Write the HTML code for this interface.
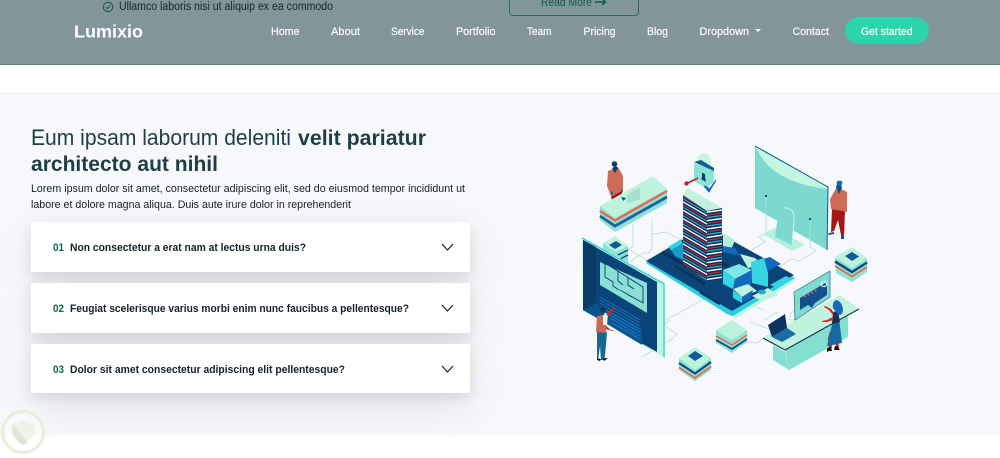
<!DOCTYPE html>
<html lang="en">
<head>
<meta charset="utf-8">
<title>Lumixio</title>
<style>
html,body{margin:0;padding:0;width:1000px;height:458px;overflow:hidden;background:#fff;font-family:"Liberation Sans",sans-serif}
.hdr{position:absolute;left:0;top:0;width:1000px;height:64px;background:#82959a;border-bottom:1px solid #55807e}
.sec{position:absolute;left:0;top:92px;width:1000px;height:343px;background:#f6f8fb}
.card{position:absolute;left:31px;width:439px;background:#fff;box-shadow:0 4px 12px rgba(0,0,0,.09),0 14px 40px rgba(0,0,0,.09)}
.pill{position:absolute;left:845px;top:17px;width:84px;height:27px;border-radius:14px;background:#2dd3a9}
.rm{position:absolute;left:509px;top:-8px;width:128px;height:22px;border:1px solid #2f6b64;border-radius:4px}
svg{position:absolute;left:0;top:0}
.art{filter:blur(.3px)}
</style>
</head>
<body>
<div class="hdr"></div>
<div class="rm"></div>
<div class="pill"></div>
<div class="sec"></div>
<div class="card" style="top:222px;height:50px"></div>
<div class="card" style="top:283px;height:50px"></div>
<div class="card" style="top:344px;height:49px"></div>

<svg width="1000" height="458" viewBox="0 0 1000 458" xmlns="http://www.w3.org/2000/svg" font-family="'Liberation Sans',sans-serif">
<defs>
<pattern id="tl" width="10" height="8.4" patternUnits="userSpaceOnUse" patternTransform="skewY(30)">
<rect width="10" height="8.4" fill="#0b2a55"/><rect y="0" width="10" height="1.5" fill="#fff"/><rect y="3" width="10" height="1.1" fill="#d92b3a"/><rect y="5.6" width="10" height="1.1" fill="#27d3e0"/>
</pattern>
<pattern id="tr" width="10" height="8.4" patternUnits="userSpaceOnUse" patternTransform="skewY(-8)">
<rect width="10" height="8.4" fill="#0b2a55"/><rect y="0" width="10" height="1.5" fill="#fff"/><rect y="3" width="10" height="1.1" fill="#d92b3a"/><rect y="5.6" width="10" height="1.1" fill="#27d3e0"/>
</pattern>
</defs>

<!-- top strip -->
<circle cx="108" cy="7" r="4.7" fill="none" stroke="#0e5a40" stroke-width="1"/>
<path d="M105.800 7l1.600 1.600 2.800-3" fill="none" stroke="#0e5a40" stroke-width="1"/>
<text x="119" y="10" font-size="11.500" fill="#17262a" textLength="214" lengthAdjust="spacingAndGlyphs">Ullamco laboris nisi ut aliquip ex ea commodo</text>
<text x="541" y="6" font-size="11.500" fill="#0f5a4a" textLength="51" lengthAdjust="spacingAndGlyphs">Read More</text>
<path d="M595 2h10M602 -1l3.500 3-3.500 3" fill="none" stroke="#0f5a4a" stroke-width="1.400"/>

<!-- nav -->
<text x="74" y="37.500" font-size="17.500" font-weight="700" fill="#fff" textLength="69" lengthAdjust="spacingAndGlyphs">Lumixio</text>
<g font-size="11.200" fill="#fff" stroke="#fff" stroke-width=".15">
<text x="271" y="35" textLength="28.500" lengthAdjust="spacingAndGlyphs">Home</text>
<text x="331" y="35" textLength="29" lengthAdjust="spacingAndGlyphs">About</text>
<text x="391" y="35" textLength="33.500" lengthAdjust="spacingAndGlyphs">Service</text>
<text x="456" y="35" textLength="39.500" lengthAdjust="spacingAndGlyphs">Portfolio</text>
<text x="527" y="35" textLength="24.500" lengthAdjust="spacingAndGlyphs">Team</text>
<text x="583.500" y="35" textLength="32" lengthAdjust="spacingAndGlyphs">Pricing</text>
<text x="647" y="35" textLength="21" lengthAdjust="spacingAndGlyphs">Blog</text>
<text x="699.500" y="35" textLength="49.500" lengthAdjust="spacingAndGlyphs">Dropdown</text>
<text x="792.500" y="35" textLength="36.500" lengthAdjust="spacingAndGlyphs">Contact</text>
<text x="861" y="35" textLength="51.500" lengthAdjust="spacingAndGlyphs">Get started</text>
</g>
<path d="M755 29h6l-3 3z" fill="#fff"/>

<!-- heading -->
<text x="31" y="145" font-size="22" fill="#1e3d45" textLength="260" lengthAdjust="spacingAndGlyphs">Eum ipsam laborum deleniti</text>
<text x="298" y="145" font-size="21.500" font-weight="700" fill="#1e3d45" textLength="128" lengthAdjust="spacingAndGlyphs">velit pariatur</text>
<text x="31" y="171" font-size="21.500" font-weight="700" fill="#1e3d45" textLength="187" lengthAdjust="spacingAndGlyphs">architecto aut nihil</text>
<text x="31" y="192" font-size="11.300" fill="#1b1f22" textLength="434" lengthAdjust="spacingAndGlyphs">Lorem ipsum dolor sit amet, consectetur adipiscing elit, sed do eiusmod tempor incididunt ut</text>
<text x="31" y="208" font-size="11.300" fill="#1b1f22" textLength="320" lengthAdjust="spacingAndGlyphs">labore et dolore magna aliqua. Duis aute irure dolor in reprehenderit</text>

<!-- accordion -->
<g font-size="10.800" font-weight="700">
<text x="53" y="251" fill="#0d6b42" textLength="11" lengthAdjust="spacingAndGlyphs">01</text>
<text x="70" y="251" fill="#14232a" textLength="236" lengthAdjust="spacingAndGlyphs">Non consectetur a erat nam at lectus urna duis?</text>
<text x="53" y="312" fill="#0d6b42" textLength="11" lengthAdjust="spacingAndGlyphs">02</text>
<text x="70" y="312" fill="#14232a" textLength="339" lengthAdjust="spacingAndGlyphs">Feugiat scelerisque varius morbi enim nunc faucibus a pellentesque?</text>
<text x="53" y="373" fill="#0d6b42" textLength="11" lengthAdjust="spacingAndGlyphs">03</text>
<text x="70" y="373" fill="#14232a" textLength="275" lengthAdjust="spacingAndGlyphs">Dolor sit amet consectetur adipiscing elit pellentesque?</text>
</g>
<g fill="none" stroke="#14232a" stroke-width="1.200">
<path d="M442 244l5.500 6 5.500-6"/>
<path d="M442 305l5.500 6 5.500-6"/>
<path d="M442 366l5.500 6 5.500-6"/>
</g>

<g class="art">
<!-- connectors -->
<g fill="none" stroke="#b5e3dc" stroke-width=".9">
<path d="M652 219v30l-3 4 -6 0 -11 7 0 3M633 224v22l-5 3 12 7 7 4"/>
<path d="M651 233l3 1 11-2 20 10"/>
<path d="M766 196v38l-7 3 6 5 -20 12"/>
<path d="M810 219v28l6 4-17 10-8-2-12 8"/>
<path d="M666 320l40-22M671 340l-28 16M671 320l-8 5 14 9-6 6"/>
<path d="M750 322l24 9 -17 12 -8-1 -12 -1"/>
<path d="M796 308l-6 6 0 6 5 0M778 312l-14 8"/>
<path d="M737 300l12 4 14 6"/>
</g>

<!-- monitor -->
<polygon points="763,234 775,228 805,245 792,251" fill="#b5f0da"/>
<polygon points="755,146 828,187 827,250 755,208" fill="#7dd9d0"/>
<path d="M756 147Q770 182 827 189L828 187Z" fill="#c3f5e1"/>
<path d="M755 146L828 187L827 250" fill="none" stroke="#0a5a9a" stroke-width="1"/>
<path d="M783 208Q794 207 794 218L792 245 775 237 778 215Z" fill="#7dd9d0"/>
<path d="M783 208Q795 207 794 220L792 244" fill="none" stroke="#c3f5e1" stroke-width="1"/>
<path d="M766 196v38" stroke="#b5e3dc" stroke-width=".8"/><path d="M810 219v28" stroke="#b5e3dc" stroke-width=".8"/>
<circle cx="766" cy="196" r="1.100" fill="#123a6a"/><circle cx="810" cy="219" r="1.100" fill="#123a6a"/>

<!-- man right -->
<path d="M832 209L845 211 844 237 841 235 838 220 834 231 831 232Z" fill="#a51616"/>
<path d="M829 233l5-1v2l-6 1zM841 235l3 0 0 4-3 0z" fill="#0f4e8f"/>
<path d="M830 199L837 187 847 192 847 212 831 209Z" fill="#cf6a58"/>
<path d="M836 187l3 7 3-6-1-4-4 0z" fill="#0f4e8f"/>
<circle cx="839.500" cy="183" r="2.800" fill="#1466b8"/><path d="M837 181q2-3 5 0z" fill="#c0f0d0"/>

<!-- right stack upper -->
<polygon points="835,257 852,268 852,282 836,273" fill="#8ae3d4"/>
<polygon points="867,258 852,268 852,282 867,272" fill="#8ae3d4"/>
<path d="M835 261.500L852 272 867 262.500" fill="none" stroke="#15497e" stroke-width="2.500"/>
<path d="M835 266L852 276.500 867 267" fill="none" stroke="#e8664f" stroke-width="1.800"/>
<polygon points="852,247 867,258 852,268 835,257" fill="#bcf3dc"/>
<polygon points="845,256 852,252 859,256.500 852,261" fill="#115a94"/>

<!-- person left with desk -->
<path d="M608 171L618 167 623 176 623 192 612 199 607 186Z" fill="#cd6a58"/>
<polygon points="611,197 622,191 622,195 612,200" fill="#9d1515"/>
<path d="M612 168l3 5 3-5-2-2z" fill="#123a6a"/>
<circle cx="614.500" cy="164" r="2.800" fill="#123a6a"/>
<path d="M611 190l2 3 0 2-2-1zM621 189l2 2-2 2z" fill="#1466b8"/>

<polygon points="600,206 653,176 667,189 615,218" fill="#bff3de"/>
<polygon points="627,195 640,187 640,199 627,204" fill="#a5dfcd"/>
<path d="M621 197l5 1-2.500 3z" fill="#0f4e8f"/>
<polygon points="600,206 615,218 615,232 600,220" fill="#8ae3d4"/>
<polygon points="615,218 667,189 667,203 615,232" fill="#8ae3d4"/>
<path d="M600 211L615 220.500 667 191" fill="none" stroke="#e8664f" stroke-width="2.400"/>
<path d="M600 216L615 226 667 197" fill="none" stroke="#1f5f9e" stroke-width="2.800"/>

<!-- small stack behind panel -->
<polygon points="603,243 615,238 628,247 628,264 603,256" fill="#8ae3d4"/>
<polygon points="603,243 615,236 628,246 616,252" fill="#bff3de"/>
<polygon points="609,245 616,241 622,245 615,249" fill="#115a94"/>
<path d="M618 255l10-5M620 259l8-4" stroke="#15497e" stroke-width="1.500"/>

<!-- central platform -->
<polygon points="646,263 706,228 795,278 735,317 727,314" fill="#27cfe0"/>
<polygon points="733,316 795,278 795,281 735,319" fill="#bff3de"/>
<polygon points="646,261 706,226 794,275 732,311" fill="#0a4478"/>
<path d="M662 252l24 14M675 266l30 18M700 250l30 18M700 292l20 12" stroke="#0a3259" stroke-width="2.500" fill="none"/>
<polygon points="668,247 681,239 684,250 676,255" fill="#2fd1e2"/>
<polygon points="671,250 683,243 683,260 675,256" fill="#1c9cc9"/>
<polygon points="723,233 735,240 731,250 723,246" fill="#b5f0da"/>
<polygon points="723,246 735,248 740,256 723,252" fill="#1468bc"/>
<polygon points="740,254 755,258 763,265 748,268" fill="#bff3de"/>
<polygon points="752,262 770,257 781,264 766,272" fill="#1468bc"/>
<polygon points="751,262 764,258 768,273 768,287 752,283" fill="#35d5e2"/>
<polygon points="723,270 739,264 752,270 735,279" fill="#7de8e8"/>
<polygon points="723,270 735,279 733,289 723,284" fill="#35d5e2"/>
<polygon points="735,279 752,270 751,287 733,289" fill="#1468bc"/>
<polygon points="733,289 748,284 757,291 742,297" fill="#bff3de"/>
<polygon points="733,290 742,297 742,303 733,298" fill="#35d5e2"/>
<polygon points="742,297 753,290 751,298 742,303" fill="#1468bc"/>
<polygon points="752,296 768,288 778,295 762,301" fill="#bff3de"/>
<ellipse cx="762" cy="292" rx="4" ry="2.300" fill="#2aa8c8"/>
<polygon points="770,285 786,276 792,279 777,288" fill="#35d5e2"/>

<!-- tower -->
<polygon points="683,195 707,210 707,281 683,264" fill="url(#tl)"/>
<polygon points="707,210 722,208 722,279 707,281" fill="url(#tr)"/>
<polygon points="683,195 688,188 722,208 707,211" fill="#bff3de"/>

<!-- lock & key -->
<path d="M697 165q-1-11 7-12 7 0 7 12z" fill="#c8f3e2"/>
<polygon points="694,163 714,170 714,182 706,188 694,181" fill="#8ae3d4"/>
<polygon points="694,162 701,160 714,168 714,171" fill="#115a94"/>
<path d="M702 173q4 0 3 4l1 5-5-3 1-2z" fill="#123a6a"/>
<path d="M704 186l5 6 7-12-6.500 9-4-3" fill="#1466b8" stroke="#1466b8" stroke-width="1"/>
<path d="M686 184l12-6" stroke="#b5262a" stroke-width="1.600"/>
<circle cx="686.500" cy="183.500" r="2.200" fill="#b5262a"/>

<!-- left panel -->
<polygon points="582,237 665,283 665,358 583,311" fill="#bff3de"/>
<path d="M582 238L664 284V357" fill="none" stroke="#22d1dd" stroke-width="1.200"/>
<polygon points="583,240 657,282 657,352 583,310" fill="#0a4478"/>
<polygon points="583,240 596,247 596,303 583,310" fill="#0a3a66"/>
<polygon points="600,262 647,283 647,313 600,285" fill="#8ae0d4"/>
<path d="M605 263L643 287V303L620 290M605 263V277L613 282V286L619 290M618 271V281L623 285M628 277V285L634 289M627 294l5 3" fill="none" stroke="#123a6a" stroke-width=".9"/>
<polygon points="584,310 596,303 642,329 642,345" fill="#0b5290"/>
<g stroke="#2487d6" stroke-width=".7">
<path d="M600 297l40 23M600 300l40 23M600 303l40 23M604 309l36 20M604 312l36 20M610 318l30 18M610 322l30 17"/>
</g>

<!-- person at panel -->
<path d="M597 332h10l-1 13 -1.500 15h-3.500l-1-14-2 14h-1Z" fill="#156a8c"/>
<path d="M597 358l3 1 1 0-1 2-3-1zM603 359l3-1 2 0-4 3z" fill="#111"/>
<polygon points="597,316 607,314 606,333 596,332" fill="#c96a58"/>
<path d="M603 316l2-3 3 1-1 11-4 0z" fill="#f5f5f0"/>
<circle cx="603" cy="309.500" r="3" fill="#123a55"/>
<path d="M606 315l5-5 3-4-1 5-4 5z" fill="#d9201f"/>
<path d="M606 326l5 4 3 0-1 1-7-2z" fill="#d9201f"/>

<!-- bottom stacks -->
<polygon points="679,358 695,370 695,381 679,370" fill="#8ae3d4"/>
<polygon points="711,358 695,370 695,381 711,370" fill="#8ae3d4"/>
<path d="M679 363L695 373.500 711 362" fill="none" stroke="#15497e" stroke-width="2.200"/>
<path d="M679 367.500L695 378 711 366.500" fill="none" stroke="#e8664f" stroke-width="1.700"/>
<polygon points="695,347 711,358 695,370 679,358" fill="#bcf3dc"/>
<polygon points="688,356 695,351 703,356 695,361" fill="#115a94"/>

<polygon points="716,330 732,340 732,353 716,343" fill="#8ae3d4"/>
<polygon points="747,330 732,340 732,353 747,342" fill="#8ae3d4"/>
<path d="M716 336L732 345 747 335" fill="none" stroke="#e8664f" stroke-width="1.500"/>
<path d="M716 340L732 349 747 339" fill="none" stroke="#15497e" stroke-width="1.800"/>
<polygon points="732,320 747,330 732,340 716,330" fill="#bcf3dc"/>

<!-- desk right -->
<polygon points="773,345 785,352 789,370 773,360" fill="#84dfd0"/>
<polygon points="785,350 848,316 848,337 789,370" fill="#84dfd0"/>
<polygon points="763,338 840,295 859,309 785,350" fill="#bff3de"/>
<path d="M763 338L785 350 859 309" fill="none" stroke="#123058" stroke-width="1.100"/>
<!-- screen -->
<polygon points="794,292 830,271 830,297 795,320" fill="#7ddbd0" stroke="#2a6c8c" stroke-width=".7"/>
<polygon points="800,298 827,282 827,295 815,303 812,308 808,305 800,310" fill="#15508e"/>
<g fill="#e8664f"><circle cx="805" cy="296.500" r="1"/><circle cx="808.500" cy="294.500" r="1"/><circle cx="812" cy="292.500" r="1"/><circle cx="815.500" cy="290.500" r="1"/></g>
<circle cx="824" cy="284" r="2.600" fill="none" stroke="#e6fbf4" stroke-width="1.300"/>
<!-- laptop -->
<polygon points="768,325 785,314 787,328 772,337" fill="#0f3360"/>
<polygon points="772,337 787,328 796,334 782,342" fill="#1a6aa5"/>
<!-- woman -->
<path d="M830 331l2 17h-3l-1-10zM836 331l3 17h-3l-1-10z" fill="#cf1a1a"/>
<path d="M827 348l4-1 1 4-3 0-2 1zM835 346l3 1 2 3-6 0z" fill="#111"/>
<polygon points="833,320 839,318 842,343 827,346" fill="#156a9e"/>
<polygon points="833,312 838,311 840,322 832,324" fill="#1a2e4a"/>
<path d="M837 300q-5 1-4 8 3 3 4 6 4 3 6-3 0-8-6-11z" fill="#1466b8"/>
<path d="M833 315l-4-5-5-3 1-1 6 3 3 4z" fill="#d9201f"/>
<path d="M833 320l-6 2-4 0-1-1 5-1 6-3z" fill="#d9201f"/>
</g>

<!-- watermark -->
<g style="filter:blur(.6px)">
<circle cx="23" cy="432" r="20.500" fill="#ffffff" fill-opacity=".3" stroke="#e4eed8" stroke-width="3"/>
<path d="M11 424q7 0 12-4 6 4 12 4 1 14-12 20-13-6-12-20z" fill="#eef3e8"/>
<path d="M13 425l15 18-5 2q-12-6-10-20z" fill="#dde5d6"/>
</g>
</svg>
</body>
</html>
